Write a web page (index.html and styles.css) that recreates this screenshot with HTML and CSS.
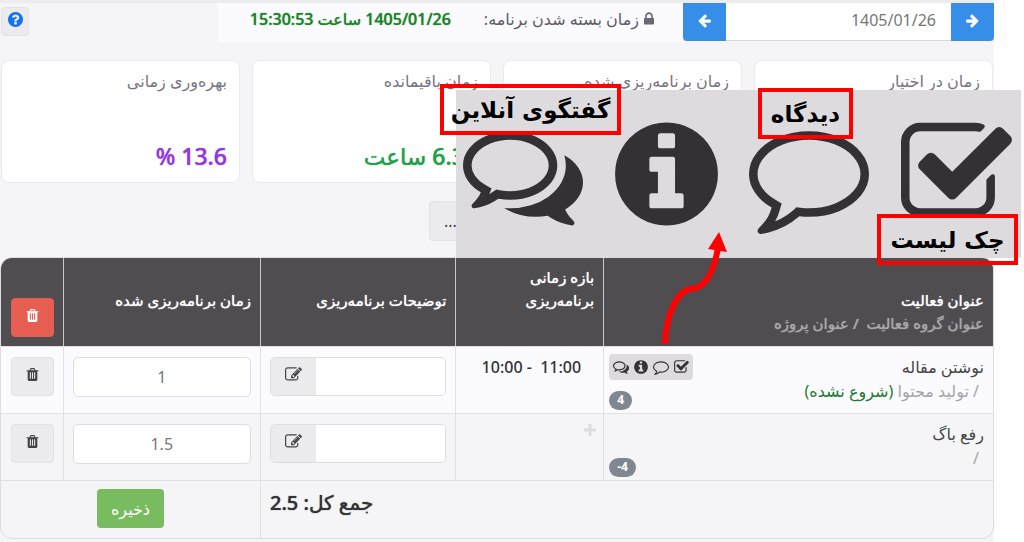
FILE: index.html
```html
<!DOCTYPE html>
<html lang="fa" dir="rtl">
<head>
  <meta charset="UTF-8" />
  <meta name="viewport" content="width=device-width, initial-scale=1.0" />
  <title>برنامه‌ریزی روزانه</title>
  <link rel="stylesheet" href="styles.css">
</head>
<body>
  <svg class="sprite" aria-hidden="true">
    <symbol id="i-check" viewBox="64 0 1664 1792"><path d="M1472 930v318q0 119-84.5 203.5t-203.5 84.5h-832q-119 0-203.5-84.5t-84.5-203.5v-832q0-119 84.5-203.5t203.5-84.5h832q63 0 117 25 15 7 18 23 3 17-9 29l-49 49q-10 10-23 10-3 0-9-2-23-6-45-6h-832q-66 0-113 47t-47 113v832q0 66 47 113t113 47h832q66 0 113-47t47-113v-254q0-13 9-22l64-64q10-10 23-10 6 0 12 3 20 8 20 29zm231-489l-814 814q-24 24-57 24t-57-24l-430-430q-24-24-24-57t24-57l110-110q24-24 57-24t57 24l263 263 647-647q24-24 57-24t57 24l110 110q24 24 24 57t-24 57z"/></symbol>
    <symbol id="i-comment" viewBox="0 0 1792 1792"><path d="M896 384q-204 0-381.500 69.500t-282 187.500-104.500 255q0 112 71.500 213.500t201.500 175.500l87 50-27 96q-24 91-70 172 152-63 275-171l43-38 57 6q69 8 130 8 204 0 381.500-69.500t282-187.500 104.500-255-104.500-255-282-187.500-381.500-69.500zm896 512q0 174-120 321.500t-326 233-450 85.500q-70 0-145-8-198 175-460 242-49 14-114 22h-5q-15 0-27-10.500t-16-27.500v-1q-3-4-.5-12t2-10 4.500-9.500l6-9 7-8.500 8-9q7-8 31-34.500t34.500-38 31-39.500 32.500-51 27-59 26-76q-157-89-247.500-220t-90.500-281q0-174 120-321.500t326-233 450-85.500 450 85.500 326 233 120 321.500z"/></symbol>
    <symbol id="i-comments" viewBox="0 0 1792 1792"><path d="M704 384q-153 0-286 52t-211.500 141-78.500 191q0 82 53 158t149 132l97 56-35 84q34-20 62-39l44-31 53 10q78 14 153 14 153 0 286-52t211.500-141 78.500-191-78.500-191-211.500-141-286-52zm0-128q191 0 353.500 68.500t256.500 186.500 94 257-94 257-256.500 186.500-353.500 68.500q-86 0-176-16-124 88-278 128-36 9-86 16h-3q-11 0-20.500-8t-11.500-21q-1-3-1-6.500t.5-6.500 2-6l2.500-5 3.500-5.500 4-5 4.500-5 4-4.500q5-6 23-25t26-29.500 22.500-29 25-38.500 20.500-44q-124-72-195-177t-71-224q0-139 94-257t256.500-186.500 353.500-68.500zm822 1169q10 24 20.500 44t25 38.500 22.500 29 26 29.500 23 25q1 1 4 4.500t4.500 5 4 5 3.500 5.500l2.500 5 2 6 .5 6.500-1 6.500q-3 14-13 22t-22 7q-50-7-86-16-154-40-278-128-90 16-176 16-271 0-472-132 58 4 88 4 161 0 309-45t264-129q125-92 192-212t67-254q0-77-23-152 129 71 204 178t75 230q0 120-71 224.500t-195 176.500z"/></symbol>
    <symbol id="i-info" viewBox="128 0 1536 1792"><path d="M1152 1376v-160q0-14-9-23t-23-9h-96v-512q0-14-9-23t-23-9h-320q-14 0-23 9t-9 23v160q0 14 9 23t23 9h96v320h-96q-14 0-23 9t-9 23v160q0 14 9 23t23 9h448q14 0 23-9t9-23zm-128-896v-160q0-14-9-23t-23-9h-192q-14 0-23 9t-9 23v160q0 14 9 23t23 9h192q14 0 23-9t9-23zm640 416q0 209-103 385.500t-279.500 279.500-385.500 103-385.500-103-279.500-279.500-103-385.500 103-385.500 279.500-279.500 385.500-103 385.500 103 279.500 279.500 103 385.500z"/></symbol>
    <symbol id="i-trash" viewBox="0 0 1792 1792"><path d="M704 1376v-704q0-14-9-23t-23-9h-64q-14 0-23 9t-9 23v704q0 14 9 23t23 9h64q14 0 23-9t9-23zm256 0v-704q0-14-9-23t-23-9h-64q-14 0-23 9t-9 23v704q0 14 9 23t23 9h64q14 0 23-9t9-23zm256 0v-704q0-14-9-23t-23-9h-64q-14 0-23 9t-9 23v704q0 14 9 23t23 9h64q14 0 23-9t9-23zm-544-992h448l-48-117q-7-9-17-11h-317q-10 2-17 11zm928 32v64q0 14-9 23t-23 9h-96v948q0 83-47 143.500t-113 60.500h-832q-66 0-113-58.500t-47-141.500v-952h-96q-14 0-23-9t-9-23v-64q0-14 9-23t23-9h309l70-167q15-37 54-63t79-26h320q40 0 79 26t54 63l70 167h309q14 0 23 9t9 23z"/></symbol>
    <symbol id="i-edit" viewBox="0 0 1792 1792"><path d="M888 1184l116-116-152-152-116 116v56h96v96h56zm440-720q-16-16-33 1l-350 350q-17 17-1 33t33-1l350-350q17-17 1-33zm80 594v190q0 119-84.500 203.500t-203.500 84.500h-832q-119 0-203.500-84.500t-84.500-203.500v-832q0-119 84.500-203.500t203.500-84.500h832q63 0 117 25 15 7 18 23 3 17-10 29l-49 49q-14 14-32 8-23-6-45-6h-832q-66 0-113 47t-47 113v832q0 66 47 113t113 47h832q66 0 113-47t47-113v-126q0-13 9-22l64-64q15-15 35-7t20 29zm-96-738l288 288-672 672h-288v-288zm444 132l-92 92-288-288 92-92q28-28 68-28t68 28l152 152q28 28 28 68t-28 68z"/></symbol>
    <symbol id="i-lock" viewBox="320 0 1152 1792"><path d="M640 768h512v-192q0-106-75-181t-181-75-181 75-75 181v192zm832 96v576q0 40-28 68t-68 28h-960q-40 0-68-28t-28-68v-576q0-40 28-68t68-28h32v-192q0-184 132-316t316-132 316 132 132 316v192h32q40 0 68 28t28 68z"/></symbol>
    <symbol id="i-arrow" viewBox="0 0 1792 1792"><path d="M1600 960q0 54-37 91l-651 651q-39 37-91 37-51 0-90-37l-75-75q-38-38-38-91t38-91l293-293h-704q-52 0-84.500-37.500t-32.500-90.500v-128q0-53 32.500-90.500t84.500-37.500h704l-293-294q-38-36-38-90t38-90l75-75q38-38 90-38 53 0 91 38l651 651q37 35 37 90z"/></symbol>
    <symbol id="i-question" viewBox="128 128 1536 1536"><path d="M1024 1376v-192q0-14-9-23t-23-9h-192q-14 0-23 9t-9 23v192q0 14 9 23t23 9h192q14 0 23-9t9-23zm256-672q0-88-55.500-163t-138.500-116-170-41q-243 0-371 213-15 24 8 42l132 100q7 6 19 6 16 0 25-12 53-68 86-92 34-24 86-24 48 0 85.500 26t37.500 59q0 38-20 61t-68 45q-63 28-115.500 86.500t-52.500 125.500v36q0 14 9 23t23 9h192q14 0 23-9t9-23q0-19 21.500-49.500t54.500-49.500q32-18 49-28.500t46-35 44.500-48 28-60.500 12.500-81zm384 192q0 209-103 385.500t-279.500 279.500-385.500 103-385.500-103-279.500-279.500-103-385.500 103-385.500 279.500-279.500 385.500-103 385.500 103 279.500 279.500 103 385.500z"/></symbol>
  </svg>

  <main class="page">
    <div class="toolbar">
      <div class="date-picker">
        <button type="button" class="date-btn" aria-label="روز قبل"><svg class="icon"><use href="#i-arrow"/></svg></button>
        <input type="text" class="date-input" value="1405/01/26" aria-label="تاریخ">
        <button type="button" class="date-btn" aria-label="روز بعد"><svg class="icon flip"><use href="#i-arrow"/></svg></button>
      </div>
      <div class="close-time">
        <svg class="icon lock"><use href="#i-lock"/></svg>
        <span class="close-label">زمان بسته شدن برنامه:</span>
        <strong class="close-value">1405/01/26 ساعت 15:30:53</strong>
      </div>
      <button type="button" class="help" aria-label="راهنما"><svg class="icon"><use href="#i-question"/></svg></button>
    </div>

    <section class="cards">
      <div class="card"><div class="card-title">زمان در اختیار</div></div>
      <div class="card"><div class="card-title">زمان برنامه‌ریزی شده</div></div>
      <div class="card"><div class="card-title">زمان باقیمانده</div><div class="card-value green">6.35 ساعت</div></div>
      <div class="card"><div class="card-title">بهره‌وری زمانی</div><div class="card-value purple">13.6 %</div></div>
    </section>

    <div class="actions">
      <button type="button" class="more">...</button>
    </div>

    <div class="table-wrap">
      <table class="plan">
        <colgroup>
          <col class="col-title"><col class="col-range"><col class="col-desc"><col class="col-time"><col class="col-del">
        </colgroup>
        <thead>
          <tr>
            <th class="two-line">عنوان فعالیت<span class="th-sub">عنوان گروه فعالیت &nbsp;/ عنوان پروژه</span></th>
            <th>بازه زمانی<br>برنامه‌ریزی</th>
            <th>توضیحات برنامه‌ریزی</th>
            <th>زمان برنامه‌ریزی شده</th>
            <th class="del"><button type="button" class="btn-del danger" aria-label="حذف همه"><svg class="icon"><use href="#i-trash"/></svg></button></th>
          </tr>
        </thead>
        <tbody>
          <tr class="odd">
            <td class="title-cell">
              <div class="activity">
                <div>
                  <div class="name">نوشتن مقاله</div>
                  <div class="sub">/ تولید محتوا <span class="state">(شروع نشده)</span></div>
                </div>
                <div class="tools">
                  <div class="strip">
                    <svg class="s-wide"><use href="#i-comments"/></svg>
                    <svg class="s-info"><use href="#i-info"/></svg>
                    <svg class="s-wide"><use href="#i-comment"/></svg>
                    <svg class="s-check"><use href="#i-check"/></svg>
                  </div>
                  <span class="badge" dir="ltr">4</span>
                </div>
              </div>
            </td>
            <td class="range"><span dir="ltr">10:00 - &nbsp;11:00</span></td>
            <td><div class="note"><input type="text" class="note-input" aria-label="توضیحات"><button type="button" class="note-btn" aria-label="ویرایش"><svg class="icon"><use href="#i-edit"/></svg></button></div></td>
            <td><input type="text" class="hours" value="1" aria-label="زمان"></td>
            <td class="del"><button type="button" class="btn-del" aria-label="حذف"><svg class="icon"><use href="#i-trash"/></svg></button></td>
          </tr>
          <tr>
            <td class="title-cell">
              <div class="activity">
                <div>
                  <div class="name">رفع باگ</div>
                  <div class="sub">/</div>
                </div>
                <div class="tools end">
                  <span class="badge" dir="ltr">-4</span>
                </div>
              </div>
            </td>
            <td class="add"><svg class="plus" viewBox="0 0 12 12"><path d="M4.500 0h3v4.500H12v3H7.500V12h-3V7.500H0v-3h4.500z"/></svg></td>
            <td><div class="note"><input type="text" class="note-input" aria-label="توضیحات"><button type="button" class="note-btn" aria-label="ویرایش"><svg class="icon"><use href="#i-edit"/></svg></button></div></td>
            <td><input type="text" class="hours" value="1.5" aria-label="زمان"></td>
            <td class="del"><button type="button" class="btn-del" aria-label="حذف"><svg class="icon"><use href="#i-trash"/></svg></button></td>
          </tr>
        </tbody>
        <tfoot>
          <tr>
            <td colspan="3" class="total">جمع کل: 2.5</td>
            <td colspan="2" class="save-cell"><button type="submit" class="save">ذخیره</button></td>
          </tr>
        </tfoot>
      </table>
    </div>
  </main>

  <!-- enlarged icons with their captions -->
  <div class="callout">
    <svg class="b-wide"><use href="#i-comments"/></svg>
    <svg class="b-info"><use href="#i-info"/></svg>
    <svg class="b-wide"><use href="#i-comment"/></svg>
    <svg class="b-check"><use href="#i-check"/></svg>
    <span class="tag tag-chat">گفتگوی آنلاین</span>
    <span class="tag tag-comment">دیدگاه</span>
    <span class="tag tag-check">چک لیست</span>
    <svg class="pointer" viewBox="0 0 70 114"><path class="line" d="M9 112C10 82 21 60 34 57C50 57 58 38 62 16"/><path class="head" d="M63 0L71 20L52 17z"/></svg>
  </div>
</body>
</html>
```

FILE: styles.css
```css
* {
  box-sizing: border-box;
}
body {
  margin: 0;
  padding-right: 30px;
  background: #fefefe;
  color: #444;
  font-family: "Noto Sans", "DejaVu Sans", sans-serif;
  font-size: 16px;
  line-height: 24px;
}
button, input {
  font: inherit;
  margin: 0;
}
button {
  cursor: pointer;
}
svg {
  fill: currentColor;
  flex: none;
}
.sprite {
  position: absolute;
  width: 0;
  height: 0;
}
.icon {
  width: 15px;
  height: 15px;
  display: block;
}
.page {
  background: #f5f4f7;
  border-top: 3px solid #ececee;
  padding-bottom: 3px;
}

/* toolbar */
.toolbar {
  display: flex;
  align-items: flex-start;
  height: 57px;
}
.date-picker {
  display: flex;
  width: 311px;
  height: 38px;
}
.date-btn {
  width: 43px;
  border: 0;
  padding: 0 0 4px;
  background: #368ee8;
  color: #fff;
  display: flex;
  align-items: center;
  justify-content: center;
}
.date-btn:first-child {
  border-radius: 0 0 4px 0;
}
.date-btn:last-child {
  border-radius: 0 0 0 4px;
}
.flip {
  transform: scaleX(-1);
}
.date-input {
  flex: 1;
  min-width: 0;
  border: 0;
  border-bottom: 1px solid #d8d8da;
  background: #fff;
  color: #777;
  padding: 0 15px 4px;
}
.close-time {
  flex: 1;
  max-width: 465px;
  height: 39px;
  padding: 4px 29px 0 0;
  background: #fafaff;
  display: flex;
  gap: 5px;
  white-space: nowrap;
}
.lock {
  width: 10px;
  height: 16px;
  margin-top: 4px;
  color: #6b6875;
}
.close-label {
  color: #5f5c66;
}
.close-value {
  color: #1e8425;
  margin-right: 28px;
  font-weight: 500;
  text-shadow: 0 0 1px currentColor;
}
.help {
  margin: 4px auto 0 1px;
  width: 28px;
  height: 29px;
  border: 1px solid #e2e2e4;
  border-radius: 4px;
  background: #ebebed;
  color: #1472f5;
  display: flex;
  align-items: center;
  justify-content: center;
  padding: 0 0 4px;
}

/* summary cards */
.cards {
  display: grid;
  grid-template-columns: repeat(4, 1fr);
  gap: 12px;
  padding: 0 1px;
}
.card {
  height: 123px;
  background: #fff;
  border: 1px solid #ebeaed;
  border-radius: 8px;
  padding: 8px 12px 10px;
  display: flex;
  flex-direction: column;
  justify-content: space-between;
}
.card-title {
  color: #77757f;
}
.card-value {
  font-size: 23px;
  line-height: 32px;
  font-weight: 500;
  text-shadow: 0 0 1px currentColor;
}
.green {
  color: #24a148;
}
.purple {
  color: #9237dd;
}
.actions {
  display: flex;
  justify-content: center;
  height: 74px;
  padding-top: 18px;
}
.more {
  width: 136px;
  height: 40px;
  padding: 0 14px;
  text-align: left;
  background: #ebeaec;
  border: 1px solid #e2e1e4;
  border-radius: 4px;
  color: #444;
}

/* plan table */
.table-wrap {
  border: 1px solid #dddce0;
  border-radius: 12px;
  overflow: hidden;
}
.plan {
  width: 100%;
  table-layout: fixed;
  border-collapse: separate;
  border-spacing: 0;
}
.col-title { width: 39.3%; }
.col-range { width: 14.9%; }
.col-desc { width: 19.7%; }
.col-time { width: 19.9%; }
.col-del { width: 6.2%; }
.plan th {
  height: 88px;
  padding: 0 9px 34px;
  background: #4f4d50;
  color: #fff;
  font-size: 15px;
  font-weight: 500;
  text-align: right;
  text-shadow: 0 0 1px currentColor;
  vertical-align: bottom;
  line-height: 23px;
  border-left: 1px solid #c8c7ca;
}
.plan th.two-line {
  padding-bottom: 11px;
}
.plan th.del {
  padding: 0 9px 9px;
}
.th-sub {
  display: block;
  color: #a9a8aa;
}
.plan td {
  height: 67px;
  padding: 10px 9px 0;
  vertical-align: top;
  border-top: 1px solid #e1e0e4;
  border-left: 1px solid #e1e0e4;
}
.plan th:last-child, .plan td:last-child {
  border-left: 0;
}
.odd {
  background: #fbfaff;
}
.btn-del {
  width: 43px;
  height: 39px;
  border: 1px solid #e2e1e4;
  border-radius: 4px;
  background: #ebeaec;
  color: #444;
  display: flex;
  align-items: center;
  justify-content: center;
  padding: 0 0 4px;
}
.danger {
  background: #e65d51;
  border-color: #e65d51;
  color: #fff;
}
.plan td.title-cell {
  padding: 7px 9px 0 5px;
}
.activity {
  display: flex;
  justify-content: space-between;
}
.name {
  color: #444;
  padding-top: 1px;
}
.sub {
  color: #a5a4a8;
  padding-right: 5px;
}
.state {
  color: #227a2e;
}
.tools {
  direction: ltr;
  display: flex;
  flex-direction: column;
  align-items: flex-start;
  gap: 11px;
  height: 56px;
}
.tools.end {
  justify-content: flex-end;
}
.strip {
  display: flex;
  align-items: center;
  gap: 5px;
  height: 26px;
  padding: 0 4px;
  border-radius: 4px;
  background: #dddbde;
  color: #333;
}
.s-wide { width: 16px; height: 16px; }
.s-info { width: 14px; height: 16px; }
.s-check { width: 15px; height: 16px; }
.badge {
  height: 19px;
  line-height: 18px;
  padding: 0 8px;
  border-radius: 10px;
  background: #808790;
  color: #fff;
  font-size: 12px;
  font-weight: 700;
}
.plan td.range {
  padding: 8px 22px 0 0;
  font-weight: 500;
  color: #333;
}
.plan td.add {
  padding-right: 7px;
}
.plus {
  width: 12px;
  height: 12px;
  display: block;
  color: #dddce0;
}
.note {
  display: flex;
  height: 39px;
  border: 1px solid #dddce0;
  border-radius: 5px;
  overflow: hidden;
}
.note-input {
  flex: 1;
  min-width: 0;
  border: 0;
  background: #fff;
}
.note-btn {
  width: 45px;
  border: 0;
  padding: 0 0 4px;
  background: #ebeaec;
  color: #444;
  display: flex;
  align-items: center;
  justify-content: center;
}
.note-btn .icon {
  width: 17px;
  height: 17px;
}
.hours {
  width: 100%;
  height: 40px;
  border: 1px solid #dddce0;
  border-radius: 5px;
  background: #fff;
  color: #777;
  text-align: center;
}
.plan tfoot td {
  height: 58px;
  padding-top: 8px;
}
.plan td.total {
  text-align: left;
  font-size: 20px;
  line-height: 28px;
  font-weight: 500;
  color: #333;
  text-shadow: 0 0 1px currentColor;
}
.plan td.save-cell {
  text-align: center;
}
.save {
  height: 39px;
  padding: 0 14px;
  border: 0;
  border-radius: 4px;
  background: #78bc5f;
  color: #fff;
}

/* callout over the page */
.callout {
  position: absolute;
  top: 90px;
  right: 3px;
  width: 565px;
  height: 168px;
  padding: 24px 9px 0 7px;
  background: #dddbde;
  color: #333135;
  direction: ltr;
  display: flex;
  justify-content: space-between;
}
.b-wide { width: 120px; height: 120px; }
.b-info { width: 103px; height: 120px; }
.b-check { width: 111px; height: 120px; }
.tag {
  position: absolute;
  display: flex;
  align-items: center;
  justify-content: center;
  height: 51px;
  border: 4px solid #fe0000;
  color: #000;
  font-family: "DejaVu Sans", sans-serif;
  font-size: 23px;
  font-weight: 700;
  direction: rtl;
  white-space: nowrap;
}
.tag-chat {
  left: -16px;
  top: -6px;
  width: 181px;
}
.tag-comment {
  left: 302px;
  top: -2px;
  width: 95px;
}
.tag-check {
  left: 421px;
  top: 124px;
  width: 141px;
}
.pointer {
  position: absolute;
  left: 200px;
  top: 142px;
  width: 70px;
  height: 114px;
  overflow: visible;
}
.pointer .line {
  fill: none;
  stroke: #fe0000;
  stroke-width: 6;
}
.pointer .head {
  fill: #fe0000;
}
```
